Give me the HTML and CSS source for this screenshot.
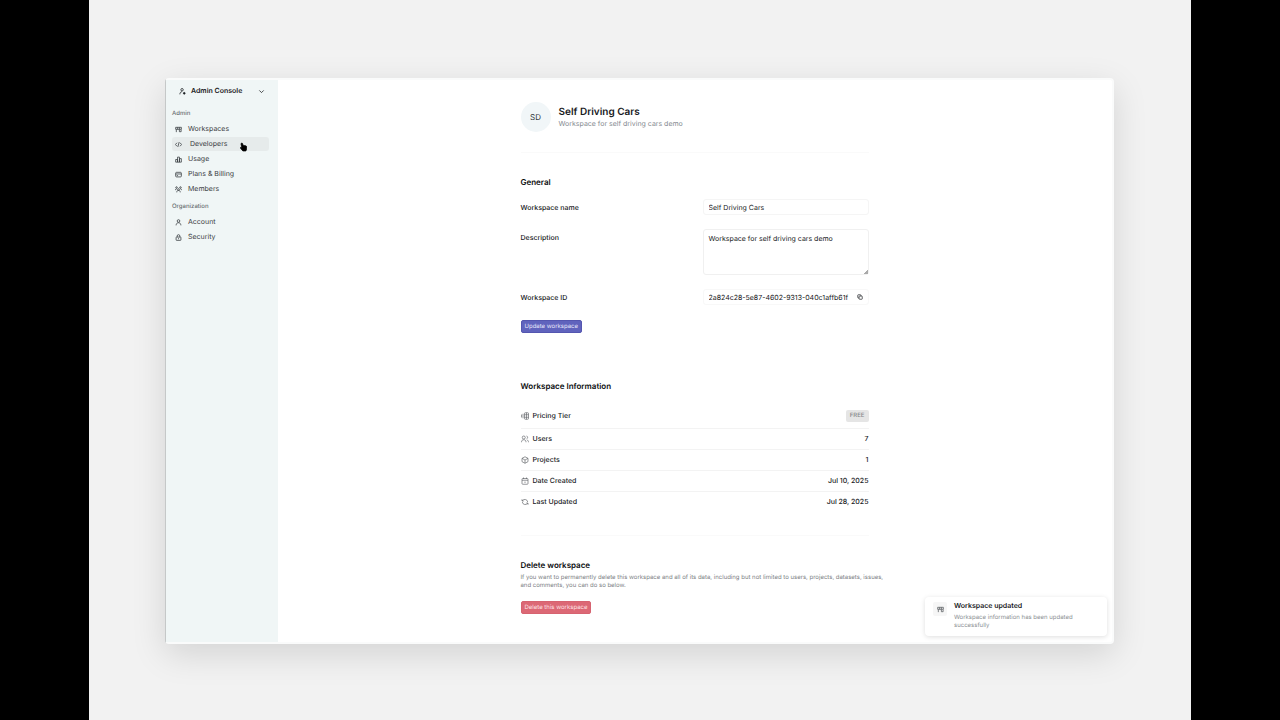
FILE: index.html
```html
<!DOCTYPE html>
<html lang="en">
<head>
  <meta charset="UTF-8">
  <meta name="viewport" content="width=device-width, initial-scale=1">
  <title>Admin Console</title>
  <link rel="stylesheet" href="styles.css">
</head>
<body>
  <div class="stage">
    <div class="window">

      <!-- Sidebar -->
      <aside class="sidebar">
        <button type="button" class="switcher">
          <svg class="icon" viewBox="0 0 16 16"><circle cx="7" cy="4" r="2.8"/><path d="M2 14.500c0-4 2-6 5-6"/><circle cx="12" cy="12" r="2" fill="currentColor"/></svg>
          <span>Admin Console</span>
          <svg class="icon chevron" viewBox="0 0 16 16"><path d="M3 5.500l5 5 5-5"/></svg>
        </button>

        <h2 class="group-title">Admin</h2>
        <nav class="menu">
          <a href="#workspaces">
            <svg class="icon" viewBox="0 0 16 16"><path d="M1.500 3h13v4.500h-13zM3 7.500V14M6 3v4.500M10 3v4.500M10 8v5h4V8"/></svg>
            Workspaces
          </a>
          <a href="#developers" class="hovered">
            <svg class="icon" viewBox="0 0 16 16"><path d="M4.500 4L1 8l3.500 4M11.500 4L15 8l-3.500 4M9.500 2.500l-3 11"/></svg>
            Developers
            <svg class="cursor" viewBox="0 0 16 20"><path d="M3 1.500c1.200-1 2.500-.3 3 1l1.300 4 5.700.8c1.500.3 2.200 1.200 2.200 2.700v4L13.500 19H6.500L1 12.500c-.5-1.500.7-2.300 2-1.500l1.500 1L2.500 4c-.2-1 0-2 .5-2.500z"/></svg>
          </a>
          <a href="#usage">
            <svg class="icon" viewBox="0 0 16 16"><path d="M1.500 8h4.300v6H1.500zM5.800 2.500h4.400V14H5.800zM10.200 6h4.300v8h-4.300z"/></svg>
            Usage
          </a>
          <a href="#billing">
            <svg class="icon" viewBox="0 0 16 16"><rect x="1.500" y="3" width="13" height="10.500" rx="2"/><path d="M1.500 6.800h13M4 10.500h3"/></svg>
            Plans &amp; Billing
          </a>
          <a href="#members">
            <svg class="icon" viewBox="0 0 16 16"><circle cx="3.500" cy="3.500" r="1.800"/><circle cx="12.500" cy="3.500" r="1.800"/><circle cx="8" cy="8" r="2"/><path d="M1 9.500c0-2 1-3 2.500-3M15 9.500c0-2-1-3-2.500-3M4 14.500c0-3 1.500-4.500 4-4.500s4 1.500 4 4.500"/></svg>
            Members
          </a>
        </nav>

        <h2 class="group-title">Organization</h2>
        <nav class="menu">
          <a href="#account">
            <svg class="icon" viewBox="0 0 16 16"><circle cx="8" cy="4.500" r="3"/><path d="M2.500 14.500c.3-4 2.300-6 5.500-6s5.200 2 5.500 6"/></svg>
            Account
          </a>
          <a href="#security">
            <svg class="icon" viewBox="0 0 16 16"><rect x="2.500" y="7" width="11" height="7.500" rx="1"/><path d="M5 7V4.500a3 3 0 0 1 6 0V7M8 9.500V12"/></svg>
            Security
          </a>
        </nav>
      </aside>

      <!-- Main -->
      <main class="main">
        <div class="content">
          <header class="profile">
            <div class="avatar">SD</div>
            <div>
              <h1>Self Driving Cars</h1>
              <p>Workspace for self driving cars demo</p>
            </div>
          </header>

          <form class="general">
            <h2>General</h2>
            <div class="field">
              <label for="name">Workspace name</label>
              <input type="text" id="name" value="Self Driving Cars">
            </div>
            <div class="field">
              <label for="description">Description</label>
              <textarea id="description">Workspace for self driving cars demo</textarea>
            </div>
            <div class="field">
              <label for="workspace-id">Workspace ID</label>
              <div class="copy-box">
                <input type="text" id="workspace-id" value="2a824c28-5e87-4602-9313-040c1affb61f" readonly>
                <button type="button" class="copy" aria-label="Copy workspace ID">
                  <svg viewBox="0 0 16 16"><rect x="5.500" y="5.500" width="8.500" height="8.500" rx="1.500"/><path d="M10.500 5.500V3.500c0-1-.5-1.500-1.500-1.500H3.500C2.500 2 2 2.500 2 3.500V9c0 1 .5 1.500 1.500 1.500h2"/></svg>
                </button>
              </div>
            </div>
            <button type="button" class="btn">Update workspace</button>
          </form>

          <section class="info">
            <h2>Workspace Information</h2>
            <table>
              <tr>
                <th scope="row"><span class="row-label">
                  <svg class="icon" viewBox="0 0 16 16"><path d="M1 5v6M4 3.500v9"/><rect x="7" y="1.500" width="8" height="13" rx="1.500"/><path d="M7 5.500h8M7 10.500h8M11 1.500v13"/></svg>
                  Pricing Tier</span></th>
                <td><span class="badge">FREE</span></td>
              </tr>
              <tr>
                <th scope="row"><span class="row-label">
                  <svg class="icon" viewBox="0 0 16 16"><circle cx="5.500" cy="5" r="3"/><path d="M1 14.500c0-3.500 1.500-5 4.500-5s4.500 1.500 4.500 5M11 2c3 .5 3 5 0 6M12 10c2 .5 3 2 3 4.500"/></svg>
                  Users</span></th>
                <td>7</td>
              </tr>
              <tr>
                <th scope="row"><span class="row-label">
                  <svg class="icon" viewBox="0 0 16 16"><path d="M8 1.500l6 3.200v6.600l-6 3.200-6-3.200V4.700zM2 4.700L8 8l6-3.300M8 8v6.500"/></svg>
                  Projects</span></th>
                <td>1</td>
              </tr>
              <tr>
                <th scope="row"><span class="row-label">
                  <svg class="icon" viewBox="0 0 16 16"><rect x="2" y="3" width="12" height="11.500" rx="1.500"/><path d="M5 1v3M11 1v3M2 6.500h12M8 9v3"/></svg>
                  Date Created</span></th>
                <td>Jul 10, 2025</td>
              </tr>
              <tr>
                <th scope="row"><span class="row-label">
                  <svg class="icon" viewBox="0 0 16 16"><path d="M2 2.500V6h3.500M2.300 6A6 6 0 0 1 13.500 8M14 13.500V10h-3.500M13.700 10A6 6 0 0 1 2.500 8"/></svg>
                  Last Updated</span></th>
                <td>Jul 28, 2025</td>
              </tr>
            </table>
          </section>

          <section class="danger">
            <h2>Delete workspace</h2>
            <p>If you want to permanently delete this workspace and all of its data, including but not limited to users, projects, datasets, issues, and comments, you can do so below.</p>
            <button type="button" class="btn btn-danger">Delete this workspace</button>
          </section>
        </div>
      </main>

      <!-- Toast -->
      <div class="toast" role="status">
        <div class="toast-icon">
          <svg class="icon" viewBox="0 0 16 16"><path d="M1.500 3h13v4.500h-13zM3 7.500V14M6 3v4.500M10 3v4.500M10 8v5h4V8"/></svg>
        </div>
        <div>
          <strong>Workspace updated</strong>
          <p>Workspace information has been updated successfully</p>
        </div>
      </div>
    </div>
  </div>
</body>
</html>
```
FILE: styles.css
```css
* {
  box-sizing: border-box;
}
body {
  margin: 0;
  padding: 0 89px;
  background: #000;
  color: #17191c;
  font-family: Inter, "Liberation Sans", sans-serif;
  font-size: 7px;
  line-height: 10px;
  text-rendering: geometricPrecision;
}
h1, h2, p {
  margin: 0;
}
button, input, textarea {
  font: inherit;
  color: inherit;
  text-rendering: inherit;
}
svg {
  fill: none;
  stroke: currentColor;
  stroke-width: 1.8;
  flex: none;
}
.icon {
  width: 7px;
  height: 7px;
}

.stage {
  display: flex;
  min-height: 100vh;
  padding: 78px 77px 76px 76px;
  background: #f2f2f2;
}
.window {
  position: relative;
  flex: 1;
  display: flex;
  border: 2px solid #fafbfb;
  border-left: 1px solid #c5c8c8;
  border-radius: 4px;
  background: #fff;
  box-shadow: 0 10px 34px rgba(0, 0, 0, 0.13);
}

/* sidebar */
.sidebar {
  width: 112px;
  padding: 4px 9px 4px 6px;
  background: #f0f6f6;
  color: #3b4043;
}
.switcher {
  display: flex;
  align-items: center;
  gap: 5px;
  width: 100%;
  height: 14px;
  padding: 0 4px 0 7px;
  border: 0;
  background: none;
  color: #1c2023;
  font-weight: 600;
}
.chevron {
  margin-left: auto;
}
.group-title {
  margin: 12px 0 4px;
  font-size: 6px;
  font-weight: 500;
  line-height: 8px;
  color: #6a7073;
}
.menu {
  display: flex;
  flex-direction: column;
  gap: 1px;
}
.menu a {
  display: flex;
  align-items: center;
  gap: 6px;
  height: 14px;
  padding-left: 3px;
  border-radius: 3px;
  color: inherit;
  text-decoration: none;
}
.menu .hovered {
  position: relative;
  gap: 8px;
  background: #e6ebeb;
}
.menu + .group-title {
  margin-top: 7px;
}
.cursor {
  position: absolute;
  right: 22px;
  top: 5px;
  width: 7px;
  height: 10px;
  fill: #000;
  stroke: #000;
}

/* main column */
.main {
  flex: 1;
  padding: 22px 17px 22px 16px;
}
.content {
  max-width: 348px;
  margin: 0 auto;
}
.content h2 {
  font-size: 8px;
  font-weight: 600;
  line-height: 12px;
  color: #0c0e10;
}
.profile {
  display: flex;
  align-items: center;
  gap: 8px;
  padding-bottom: 20px;
  border-bottom: 1px solid #fafafa;
}
.profile h1 {
  font-size: 10px;
  font-weight: 600;
  line-height: 13px;
}
.profile p {
  color: #858a90;
}
.avatar {
  width: 30px;
  height: 30px;
  border-radius: 50%;
  background: #f1f6f8;
  color: #33383c;
  font-size: 8px;
  line-height: 30px;
  text-align: center;
}

.general {
  padding-top: 23px;
}
.general h2 {
  margin-bottom: 11px;
}
.field {
  display: grid;
  grid-template-columns: 1fr 166px;
  margin-bottom: 14px;
}
.field label {
  padding-top: 4px;
  font-weight: 500;
}
.field input,
.field textarea {
  display: block;
  width: 100%;
  height: 16px;
  padding: 2px 5px;
  border: 1px solid #f5f5f5;
  border-radius: 3px;
  background: #fff;
  outline: none;
}
.field textarea {
  height: 46px;
  padding-top: 4px;
  border-color: #f0f0f0;
  resize: vertical;
}
textarea::-webkit-resizer {
  background: linear-gradient(135deg, transparent 85%, #aaa 85%);
}
.copy-box {
  display: flex;
  border: 1px solid #f8f8f8;
  border-radius: 3px;
}
.field .copy-box input {
  flex: 1;
  min-width: 0;
  height: 14px;
  padding-right: 0;
  border: 0;
}
.copy {
  display: flex;
  align-items: center;
  padding: 0 5px;
  border: 0;
  background: none;
}
.copy svg {
  width: 6px;
  height: 6px;
}
.btn {
  display: block;
  height: 13px;
  padding: 0 3px;
  border: 1px solid #5456b0;
  border-radius: 2px;
  background: #6063bd;
  color: #e7e7fa;
  font-size: 6px;
  font-weight: 400;
  line-height: 11px;
}
.general .btn {
  margin-top: 15px;
}

.info {
  margin-top: 47px;
  padding-bottom: 23px;
  border-bottom: 1px solid #fafafa;
}
.info table {
  width: 100%;
  margin-top: 12px;
  border-collapse: collapse;
}
.info th,
.info td {
  height: 21px;
  padding: 0;
  font-weight: 500;
  text-align: left;
}
.info tr:first-child > * {
  height: 24px;
}
.info tr + tr {
  border-top: 1px solid #f3f3f3;
}
.info td:last-child {
  text-align: right;
}
.row-label {
  display: flex;
  align-items: center;
  gap: 4px;
}
.row-label .icon {
  width: 8px;
  height: 8px;
  color: #5c6064;
  stroke-width: 1.3;
}
.badge {
  display: inline-block;
  padding: 1px 4px;
  border-radius: 2px;
  background: #e5e5e5;
  color: #85888a;
  font-size: 6px;
}

.danger {
  padding-top: 23px;
}
.danger p {
  /* the note runs a little wider than the form column */
  margin: 3px -17px 11px 0;
  color: #7c8084;
  font-size: 6px;
  line-height: 8px;
}
.btn-danger {
  border-color: #d66370;
  background: #dc6875;
  color: #ffe3e6;
}

/* toast */
.toast {
  position: absolute;
  right: 5px;
  bottom: 6px;
  display: flex;
  gap: 7px;
  width: 182px;
  padding: 4px 30px 6px 8px;
  border-radius: 4px;
  background: #fff;
  box-shadow: 0 1px 5px rgba(0, 0, 0, 0.13);
}
.toast-icon {
  flex: none;
  display: flex;
  align-items: center;
  justify-content: center;
  width: 14px;
  height: 14px;
  margin-top: 1px;
  border-radius: 2px;
  background: #f6f6f6;
  color: #5c6064;
}
.toast strong {
  font-weight: 600;
}
.toast p {
  margin-top: 3px;
  color: #8b8f93;
  font-size: 6px;
  line-height: 8px;
}
```
